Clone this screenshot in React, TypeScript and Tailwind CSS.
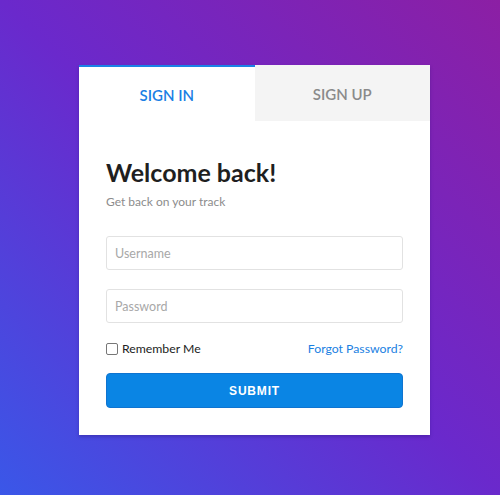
import { useState } from "react";

const App = () => {
  const [tab, setTab] = useState<"in" | "up">("in");

  return (
    <div className="min-h-[495px] w-full bg-[linear-gradient(to_top_right,#3a57e8,#6a29cc_50%,#8c1fa4)] pt-[65px] pl-[79px] font-['Lato','Liberation_Sans',sans-serif]">
      <div className="w-[351px] bg-white shadow-[0_2px_3px_rgba(40,20,120,0.35)]">
        {/* tabs */}
        <div className="flex h-[56px]">
          <button
            onClick={() => setTab("in")}
            className="flex-1 border-t-2 border-[#1a82e6] bg-white pt-[2px] text-[15px] font-semibold text-[#1a80e4]"
          >
            SIGN IN
          </button>
          <button
            onClick={() => setTab("up")}
            className="flex-1 bg-[#f4f4f4] pt-[2px] text-[15px] font-semibold text-[#8a8a8a]"
          >
            SIGN UP
          </button>
        </div>

        <div className="px-[27px] pt-[35px] pb-[27px]">
          <h1 className="text-[25px] leading-[32px] font-bold text-[#1f1f1f]">Welcome back!</h1>
          <p className="mt-[6px] text-[12px] leading-[16px] text-[#8c8c8c]">Get back on your track</p>

          <input
            type="text"
            placeholder="Username"
            className="mt-[26px] block h-[34px] w-full rounded-[3px] border border-[#e2e2e2] px-[8px] text-[12.5px] text-[#333] placeholder:text-[#a8a8a8] outline-none"
          />
          <input
            type="password"
            placeholder="Password"
            className="mt-[19px] block h-[34px] w-full rounded-[3px] border border-[#e2e2e2] px-[8px] text-[12.5px] text-[#333] placeholder:text-[#a8a8a8] outline-none"
          />

          <div className="mt-[18px] flex h-[16px] items-center justify-between text-[12.25px]">
            <label className="flex items-center gap-[4px] text-[#222]">
              <span className="block h-[12px] w-[12px] rounded-[2px] border border-[#777] bg-white" />
              Remember Me
            </label>
            <a href="#" className="text-[#1a7fe2]">Forgot Password?</a>
          </div>

          <button className="mt-[16px] block h-[35px] w-full rounded-[4px] border border-[#0f74d0] bg-[#0a85e4] font-['Liberation_Sans',Arial,sans-serif] text-[12px] font-bold tracking-[0.8px] text-white">
            SUBMIT
          </button>
        </div>
      </div>
    </div>
  );
};

export default App;
